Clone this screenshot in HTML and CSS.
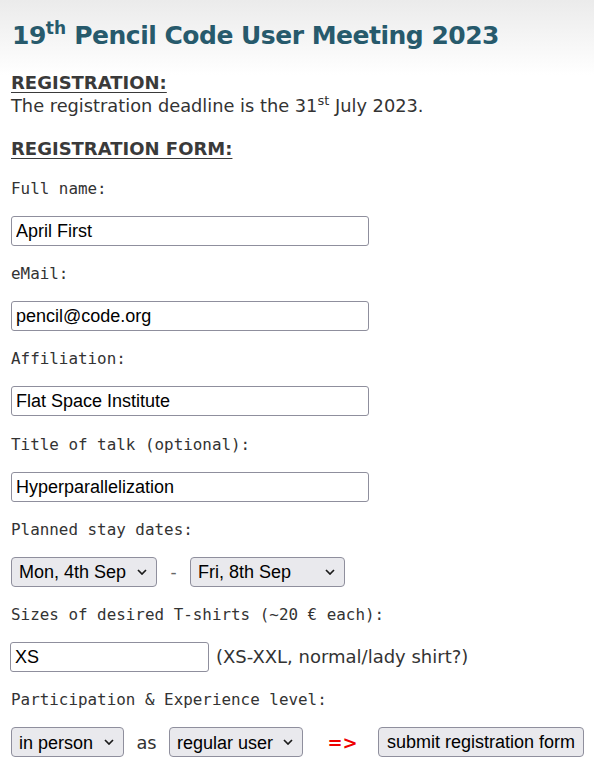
FILE: index.html
```html
<!DOCTYPE html>
<html lang="en">
<head>
<meta charset="utf-8">
<title>19th Pencil Code User Meeting 2023</title>
<link rel="stylesheet" href="styles.css">
</head>
<body>
<div class="page">
  <h1 class="title">19<sup>th</sup> Pencil Code User Meeting 2023</h1>

  <h2 class="section">REGISTRATION:</h2>
  <p class="text">The registration deadline is the 31<sup>st</sup> July 2023.</p>

  <h2 class="section section-form">REGISTRATION FORM:</h2>

  <form class="form">
    <div class="field">
      <label class="label" for="name">Full name:</label>
      <input class="input" id="name" type="text" value="April First">
    </div>
    <div class="field">
      <label class="label" for="email">eMail:</label>
      <input class="input" id="email" type="text" value="pencil@code.org">
    </div>
    <div class="field">
      <label class="label" for="aff">Affiliation:</label>
      <input class="input" id="aff" type="text" value="Flat Space Institute">
    </div>
    <div class="field">
      <label class="label" for="talk">Title of talk (optional):</label>
      <input class="input" id="talk" type="text" value="Hyperparallelization">
    </div>
    <div class="field">
      <span class="label">Planned stay dates:</span>
      <div class="row">
        <span class="select-wrap sel-from">
          <select class="select"><option>Mon, 4th Sep</option></select>
          <svg class="chev" viewBox="0 0 10 6" width="10" height="6"><path d="M1 1l4 4 4-4" fill="none" stroke="#1b1b1b" stroke-width="1.7"/></svg>
        </span>
        <span class="dash">-</span>
        <span class="select-wrap sel-to">
          <select class="select"><option>Fri, 8th Sep</option></select>
          <svg class="chev" viewBox="0 0 10 6" width="10" height="6"><path d="M1 1l4 4 4-4" fill="none" stroke="#1b1b1b" stroke-width="1.7"/></svg>
        </span>
      </div>
    </div>
    <div class="field">
      <label class="label" for="size">Sizes of desired T-shirts (~20 € each):</label>
      <div class="row">
        <input class="input input-small" id="size" type="text" value="XS">
        <span class="hint">(XS-XXL, normal/lady shirt?)</span>
      </div>
    </div>
    <div class="field">
      <span class="label">Participation &amp; Experience level:</span>
      <div class="row">
        <span class="select-wrap sel-part">
          <select class="select"><option>in person</option></select>
          <svg class="chev" viewBox="0 0 10 6" width="10" height="6"><path d="M1 1l4 4 4-4" fill="none" stroke="#1b1b1b" stroke-width="1.7"/></svg>
        </span>
        <span class="as">as</span>
        <span class="select-wrap sel-level">
          <select class="select"><option>regular user</option></select>
          <svg class="chev" viewBox="0 0 10 6" width="10" height="6"><path d="M1 1l4 4 4-4" fill="none" stroke="#1b1b1b" stroke-width="1.7"/></svg>
        </span>
        <span class="arrow">=&gt;</span>
        <button class="button" type="button">submit registration form</button>
      </div>
    </div>
  </form>
</div>
</body>
</html>
```
FILE: styles.css
```css
html, body {
  margin: 0;
  padding: 0;
}
body {
  background: linear-gradient(to bottom, #ebebeb 0, #ffffff 75px) no-repeat;
  background-color: #fff;
  font-family: "DejaVu Sans", Verdana, sans-serif;
  color: #333;
}
.page {
  padding: 18px 0 0 11px;
}
.title {
  margin: 0 0 0 1px;
  font-size: 25px;
  line-height: 36px;
  letter-spacing: -0.5px;
  font-weight: bold;
  color: #275a6c;
}
.title sup {
  font-size: 17px;
  line-height: 0;
  letter-spacing: 0;
  vertical-align: 10px;
}
.section {
  margin: 18px 0 0 0;
  font-size: 18px;
  line-height: 22px;
  font-weight: bold;
  color: #3a3a3a;
  text-decoration: underline;
  text-underline-offset: 3px;
}
.section-form {
  margin-top: 21px;
}
.text {
  margin: 1px 0 0 0;
  font-size: 17.8px;
  line-height: 22px;
  color: #333;
}
.text sup {
  font-size: 13px;
  line-height: 0;
  vertical-align: 7px;
}
.form {
  margin-top: 19px;
  display: flex;
  flex-direction: column;
  gap: 18.2px;
}
.field {
  display: flex;
  flex-direction: column;
  gap: 17px;
  align-items: flex-start;
}
.label {
  font-family: "DejaVu Sans Mono", Consolas, monospace;
  font-size: 15.9px;
  line-height: 20px;
  color: #333;
}
.input {
  box-sizing: border-box;
  width: 358px;
  height: 30px;
  margin: 0;
  padding: 1px 4px 0;
  border: 1px solid #8f8f9d;
  border-radius: 3px;
  font-family: "Liberation Sans", Arial, sans-serif;
  font-size: 18px;
  color: #000;
  background: #fff;
}
.input-small {
  width: 199px;
  margin-left: -1px;
}
.row {
  display: flex;
  align-items: center;
  white-space: nowrap;
}
.row > * {
  flex-shrink: 0;
}
.select-wrap {
  position: relative;
  display: inline-block;
  height: 30px;
}
.select {
  appearance: none;
  -webkit-appearance: none;
  box-sizing: border-box;
  height: 30px;
  margin: 0;
  padding: 1px 28px 0 7px;
  border: 1px solid #8f8f9d;
  border-radius: 4px;
  background: #e9e9ed;
  font-family: "Liberation Sans", Arial, sans-serif;
  font-size: 18px;
  color: #000;
}
.chev {
  position: absolute;
  top: 12px;
  right: 10px;
  pointer-events: none;
}
.sel-from .select { width: 146px; }
.sel-to .select { width: 155px; }
.sel-part .select { width: 113px; }
.sel-level .select { width: 134px; }
.dash {
  width: 33px;
  text-align: center;
  font-family: "DejaVu Sans", Verdana, sans-serif;
  font-size: 17px;
  color: #666;
}
.hint {
  margin-left: 7px;
  font-family: "DejaVu Sans", Verdana, sans-serif;
  font-size: 18px;
  color: #333;
}
.as {
  width: 45px;
  text-align: center;
  font-family: "DejaVu Sans", Verdana, sans-serif;
  font-size: 17.8px;
  color: #333;
}
.arrow {
  width: 75px;
  padding-left: 4px;
  box-sizing: border-box;
  text-align: center;
  font-family: "DejaVu Sans", Verdana, sans-serif;
  font-size: 18px;
  font-weight: bold;
  color: #ee0000;
}
.button {
  box-sizing: border-box;
  height: 30px;
  margin: 0;
  padding: 1px 8px 0;
  border: 1px solid #8f8f9d;
  border-radius: 4px;
  background: #e9e9ed;
  font-family: "Liberation Sans", Arial, sans-serif;
  font-size: 18px;
  color: #000;
  white-space: nowrap;
}
```
